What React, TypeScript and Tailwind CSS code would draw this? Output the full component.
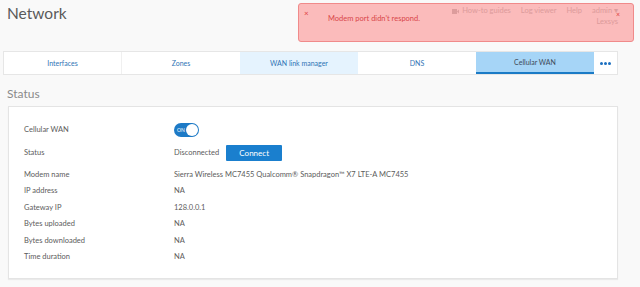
import { type ReactNode } from "react";

const TABS = [
  { label: "Interfaces", state: "idle" },
  { label: "Zones", state: "idle" },
  { label: "WAN link manager", state: "hover" },
  { label: "DNS", state: "idle" },
  { label: "Cellular WAN", state: "active" },
] as const;

const ROWS = [
  { label: "Modem name", value: "Sierra Wireless MC7455 Qualcomm® Snapdragon™ X7 LTE-A MC7455" },
  { label: "IP address", value: "NA" },
  { label: "Gateway IP", value: "128.0.0.1" },
  { label: "Bytes uploaded", value: "NA" },
  { label: "Bytes downloaded", value: "NA" },
  { label: "Time duration", value: "NA" },
] as const;

function Toggle(): ReactNode {
  return (
    <span className="inline-flex items-center w-[25px] h-[14px] rounded-full bg-[#1d7ac6] pl-[3px] relative">
      <span className="text-[5px] text-white leading-none">ON</span>
      <span className="absolute right-[1px] top-[1px] w-[12px] h-[12px] rounded-full bg-white" />
    </span>
  );
}

export default function App(): ReactNode {
  return (
    <div
      className="relative w-[640px] h-[287px] overflow-hidden bg-[#f9f9f9] text-[#5c5c5c]"
      style={{ fontFamily: "Lato, 'Noto Sans', sans-serif" }}
    >
      <header className="flex justify-between h-[51px] pl-[7px] pr-[22px]">
        <h1 className="text-[15.5px] leading-none pt-[6px] text-[#5a5a5a]">Network</h1>
        <div className="flex items-start gap-[10px] pt-[6px] text-[7.5px] text-[#d0d0d0] leading-[10px]">
          <span className="flex items-center gap-[3px]">
            <svg width="7" height="5" viewBox="0 0 7 5">
              <rect x="0" y="0" width="5" height="5" fill="#d0d0d0" />
              <path d="M5 2.5 7 0.5 7 4.5Z" fill="#d0d0d0" />
            </svg>
            How-to guides
          </span>
          <span>Log viewer</span>
          <span>Help</span>
          <span className="flex flex-col items-end">
            <span>admin ▾</span>
            <span className="mt-[1px]">Lexsys</span>
          </span>
        </div>
      </header>

      <div className="absolute left-[298px] top-[3px] w-[336px] h-[39px] rounded-[3px] border border-[#f08a8a] bg-[#ff0000]/25">
        <span className="absolute left-[5px] top-[5px] text-[8px] text-[#e0403c] leading-none">×</span>
        <span className="absolute left-[29px] top-[11px] text-[7.5px] text-[#d9474a] leading-none">
          Modem port didn't respond.
        </span>
        <span className="absolute right-[13px] top-[7px] text-[7px] text-[#e0403c] leading-none">×</span>
      </div>

      <nav className="ml-[3px] w-[615px] h-[24px] flex bg-white border border-[#e6e6e6] text-[7px]">
        {TABS.map((t, i) => (
          <div
            key={t.label}
            className={
              "w-[118px] flex items-center justify-center " +
              (t.state === "active"
                ? "bg-[#a6d5f7] text-[#3d4a58] border-b-2 border-[#1b7bc6]"
                : t.state === "hover"
                  ? "bg-[#e5f3fe] text-[#2f73b5]"
                  : "text-[#2f73b5]") +
              (i === 0 ? " border-r border-[#f0f0f0]" : "")
            }
          >
            {t.label}
          </div>
        ))}
        <div className="flex-1 flex items-center justify-center gap-[1px]">
          <span className="w-[3px] h-[3px] rounded-full bg-[#1b6fc0]" />
          <span className="w-[3px] h-[3px] rounded-full bg-[#1b6fc0]" />
          <span className="w-[3px] h-[3px] rounded-full bg-[#1b6fc0]" />
        </div>
      </nav>

      <h2 className="pl-[7px] pt-[10px] text-[12px] leading-[18px] text-[#8a8a8a]">Status</h2>

      <section className="ml-[8px] mt-[3px] w-[610px] h-[173px] bg-white border border-[#e4e4e4] shadow-[0_1px_1px_rgba(0,0,0,0.06)] pl-[15px] pt-[16px] text-[7.5px]">
        <div className="flex items-center h-[14px]">
          <span className="w-[150px]">Cellular WAN</span>
          <Toggle />
        </div>
        <div className="flex items-center h-[16px] mt-[8px]">
          <span className="w-[150px]">Status</span>
          <span>Disconnected</span>
          <span className="ml-[7px] w-[56px] h-[16px] bg-[#1a7fce] text-white text-[8px] flex items-center justify-center rounded-[1px]">
            Connect
          </span>
        </div>
        <div className="mt-[5px] flex flex-col">
          {ROWS.map((r) => (
            <div key={r.label} className="flex items-center h-[16.5px]">
              <span className="w-[150px]">{r.label}</span>
              <span>{r.value}</span>
            </div>
          ))}
        </div>
      </section>
    </div>
  );
}
